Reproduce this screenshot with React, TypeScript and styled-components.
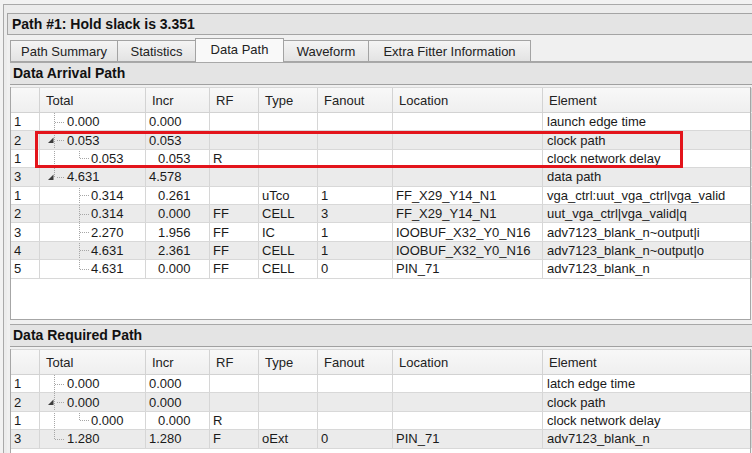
import styled, { createGlobalStyle, css } from "styled-components";

const GlobalStyle = createGlobalStyle`
  html, body {
    margin: 0;
    padding: 0;
    background: #f2f2f2;
    overflow: hidden;
  }
  body {
    font-family: "Liberation Sans", Arial, sans-serif;
    font-size: 13px;
    color: #1a1a1a;
  }
`;

const COLS = "29px 106px 64px 49px 59px 75px 150px 209px";

const Screen = styled.div`
  width: 752px;
  height: 453px;
  padding-top: 4px;
  box-sizing: border-box;
  overflow: hidden;
`;

const Frame = styled.div`
  margin-left: 3px;
  height: 100%;
  border-top: 1px solid #a9a9a9;
  border-left: 1px solid #a9a9a9;
  background: #ececec;
  padding: 8px 0 0 3px;
  display: flex;
  flex-direction: column;
`;

const TitleBar = styled.div`
  height: 20px;
  line-height: 20px;
  border: 1px solid #a4a4a4;
  border-right: none;
  background: #e4e4e4;
  font-weight: bold;
  font-size: 14px;
  padding-left: 4px;
  color: #111;
`;

const Body = styled.div`
  flex: 1;
  background: #f0f0f0;
  padding: 3px 0 0 3px;
  display: flex;
  flex-direction: column;
`;

const TabStrip = styled.div`
  display: flex;
  align-items: flex-end;
  height: 23px;
  border-bottom: 1px solid #a6a6a6;
`;

const Tab = styled.div<{ $w: number; $active?: boolean }>`
  width: ${(p) => p.$w}px;
  height: 21px;
  box-sizing: border-box;
  border: 1px solid #a3a3a3;
  border-bottom: none;
  margin-right: -1px;
  display: flex;
  align-items: center;
  justify-content: center;
  font-size: 13px;
  color: #222;
  background: linear-gradient(#f4f4f4, #e3e3e3);
  ${(p) =>
    p.$active &&
    css`
      height: 24px;
      margin-bottom: -1px;
      background: #f9f9f9;
      position: relative;
      z-index: 1;
      padding-bottom: 2px;
    `}
`;

const SectionHeader = styled.div<{ $gap: number }>`
  margin-top: ${(p) => p.$gap}px;
  height: 21px;
  line-height: 21px;
  border-top: 1px solid #a8a8a8;
  border-bottom: 1px solid #a0a0a0;
  background: #e4e4e4;
  font-weight: bold;
  font-size: 14px;
  padding-left: 3px;
  color: #111;
`;

const TableArea = styled.div<{ $h?: number }>`
  position: relative;
  margin-top: 2px;
  width: 741px;
  box-sizing: border-box;
  background: #fff;
  border: 1px solid #a6a6a6;
  border-top: none;
  ${(p) => (p.$h ? `height: ${p.$h}px;` : "flex: 1;")}
`;

const HeadRow = styled.div`
  display: grid;
  grid-template-columns: ${COLS};
  height: 26px;
  background: linear-gradient(#f8f8f8, #efefef);
  border-top: 1px solid #d8d8d8;
  border-bottom: 1px solid #d2d2d2;
  box-sizing: border-box;
`;

const HeadCell = styled.div`
  border-right: 1px solid #d3d3d3;
  padding-left: 6px;
  display: flex;
  align-items: center;
  color: #222;
`;

const Row = styled.div<{ $alt: boolean }>`
  display: grid;
  grid-template-columns: ${COLS};
  height: 18.4px;
  box-sizing: border-box;
  border-bottom: 1px solid #d8d8d8;
  background: ${(p) => (p.$alt ? "#ebebeb" : "#ffffff")};
`;

const Cell = styled.div<{ $pad?: number }>`
  border-right: 1px solid #d6d6d6;
  padding-left: ${(p) => p.$pad ?? 3}px;
  display: flex;
  align-items: center;
  white-space: nowrap;
  overflow: hidden;
`;

const NumCell = styled(Cell)`
  padding-left: 3px;
`;

const TreeCell = styled(Cell)`
  padding-left: 0;
`;

const Highlight = styled.div`
  position: absolute;
  left: 24px;
  top: 44px;
  width: 648px;
  height: 37px;
  box-sizing: border-box;
  border: 3px solid #e3141b;
  pointer-events: none;
`;

type Item = {
  n: string;
  total: string;
  incr: string;
  rf?: string;
  type?: string;
  fanout?: string;
  loc?: string;
  el: string;
  level: 1 | 2;
  toggle?: boolean;
  last?: boolean;
  parentGoesOn?: boolean;
};

const arrival: Item[] = [
  { n: "1", total: "0.000", incr: "0.000", el: "launch edge time", level: 1 },
  { n: "2", total: "0.053", incr: "0.053", el: "clock path", level: 1, toggle: true },
  { n: "1", total: "0.053", incr: "0.053", rf: "R", el: "clock network delay", level: 2, last: true, parentGoesOn: true },
  { n: "3", total: "4.631", incr: "4.578", el: "data path", level: 1, toggle: true, last: true },
  { n: "1", total: "0.314", incr: "0.261", type: "uTco", fanout: "1", loc: "FF_X29_Y14_N1", el: "vga_ctrl:uut_vga_ctrl|vga_valid", level: 2 },
  { n: "2", total: "0.314", incr: "0.000", rf: "FF", type: "CELL", fanout: "3", loc: "FF_X29_Y14_N1", el: "uut_vga_ctrl|vga_valid|q", level: 2 },
  { n: "3", total: "2.270", incr: "1.956", rf: "FF", type: "IC", fanout: "1", loc: "IOOBUF_X32_Y0_N16", el: "adv7123_blank_n~output|i", level: 2 },
  { n: "4", total: "4.631", incr: "2.361", rf: "FF", type: "CELL", fanout: "1", loc: "IOOBUF_X32_Y0_N16", el: "adv7123_blank_n~output|o", level: 2 },
  { n: "5", total: "4.631", incr: "0.000", rf: "FF", type: "CELL", fanout: "0", loc: "PIN_71", el: "adv7123_blank_n", level: 2, last: true },
];

const required: Item[] = [
  { n: "1", total: "0.000", incr: "0.000", el: "latch edge time", level: 1 },
  { n: "2", total: "0.000", incr: "0.000", el: "clock path", level: 1, toggle: true },
  { n: "1", total: "0.000", incr: "0.000", rf: "R", el: "clock network delay", level: 2, last: true, parentGoesOn: true },
  { n: "3", total: "1.280", incr: "1.280", rf: "F", type: "oExt", fanout: "0", loc: "PIN_71", el: "adv7123_blank_n", level: 1, last: true },
];

const headers = ["", "Total", "Incr", "RF", "Type", "Fanout", "Location", "Element"];

// dotted tree guides drawn in front of the Total value
const TreeGuide = ({ item }: { item: Item }) => {
  const dot = { stroke: "#a6a6a6", strokeWidth: 1, strokeDasharray: "1 1" };
  const w = item.level === 1 ? 27 : 51;
  return (
    <svg width={w} height={18} style={{ flex: "none", display: "block" }}>
      {item.level === 1 ? (
        <>
          <line x1={14.5} y1={0} x2={14.5} y2={item.last ? 9 : 18} {...dot} />
          <line x1={item.toggle ? 17 : 15} y1={9.5} x2={24} y2={9.5} {...dot} />
          {item.toggle && <polygon points="13.5,6.5 13.5,12 8,12" fill="#3c3c3c" />}
        </>
      ) : (
        <>
          {item.parentGoesOn && <line x1={14.5} y1={0} x2={14.5} y2={18} {...dot} />}
          <line x1={39.5} y1={0} x2={39.5} y2={item.last ? 9 : 18} {...dot} />
          <line x1={40} y1={9.5} x2={49} y2={9.5} {...dot} />
        </>
      )}
    </svg>
  );
};

const PathTable = ({ items }: { items: Item[] }) => (
  <>
    <HeadRow>
      {headers.map((h, i) => (
        <HeadCell key={i}>{h}</HeadCell>
      ))}
    </HeadRow>
    {items.map((it, i) => (
      <Row key={i} $alt={i % 2 === 1}>
        <NumCell>{it.n}</NumCell>
        <TreeCell>
          <TreeGuide item={it} />
          {it.total}
        </TreeCell>
        <Cell $pad={it.level === 2 ? 12 : 3}>{it.incr}</Cell>
        <Cell>{it.rf}</Cell>
        <Cell>{it.type}</Cell>
        <Cell>{it.fanout}</Cell>
        <Cell>{it.loc}</Cell>
        <Cell $pad={4}>{it.el}</Cell>
      </Row>
    ))}
  </>
);

const tabs = [
  { label: "Path Summary", w: 108 },
  { label: "Statistics", w: 79 },
  { label: "Data Path", w: 89, active: true },
  { label: "Waveform", w: 86 },
  { label: "Extra Fitter Information", w: 163 },
];

export default function App() {
  return (
    <Screen>
      <GlobalStyle />
      <Frame>
        <TitleBar>Path #1: Hold slack is 3.351</TitleBar>
        <Body>
          <TabStrip>
            {tabs.map((t) => (
              <Tab key={t.label} $w={t.w} $active={t.active}>
                {t.label}
              </Tab>
            ))}
          </TabStrip>
          <SectionHeader $gap={0}>Data Arrival Path</SectionHeader>
          <TableArea $h={233}>
            <PathTable items={arrival} />
            <Highlight />
          </TableArea>
          <SectionHeader $gap={4}>Data Required Path</SectionHeader>
          <TableArea>
            <PathTable items={required} />
          </TableArea>
        </Body>
      </Frame>
    </Screen>
  );
}
